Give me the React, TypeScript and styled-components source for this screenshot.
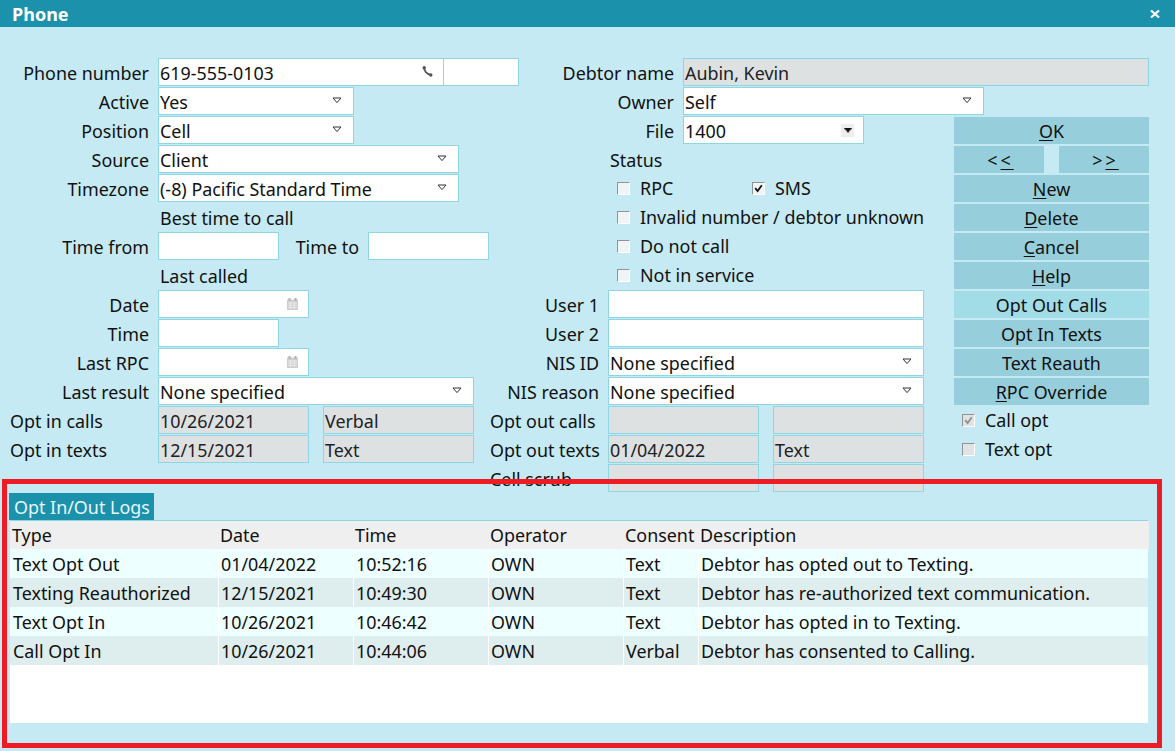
import React from "react";
import styled, { createGlobalStyle } from "styled-components";

const Global = createGlobalStyle`
  html, body { margin: 0; padding: 0; background: #c5eaf3; }
  body { font-family: "Noto Sans", "Open Sans", sans-serif; font-size: 17.9px; color: #111; }
`;

const Page = styled.div`
  position: relative;
  width: 1175px;
  height: 751px;
  overflow: hidden;
  background: #c5eaf3;
`;

const TitleBar = styled.header`
  height: 27px;
  background: #1c91ab;
  color: #fff;
  display: flex;
  align-items: center;
  justify-content: space-between;
  padding: 0 15px 0 12px;
  font-weight: 700;
  font-size: 18px;
`;

const Form = styled.div`
  display: flex;
  padding-top: 31px;
  height: 462px;
  box-sizing: border-box;
`;

const Column = styled.div<{ $w: number }>`
  width: ${(p) => p.$w}px;
  flex: none;
  display: flex;
  flex-direction: column;
  gap: 1px;
`;

const Row = styled.div`
  display: flex;
  height: 28px;
  align-items: center;
  flex: none;
`;

const Label = styled.label<{ $w: number }>`
  width: ${(p) => p.$w}px;
  margin-right: 9px;
  padding-top: 2px;
  flex: none;
  text-align: right;
  white-space: nowrap;
`;

const LeftLabel = styled.label<{ $indent: number; $w: number }>`
  width: ${(p) => p.$w}px;
  padding: 2px 0 0 ${(p) => p.$indent}px;
  box-sizing: border-box;
  flex: none;
  white-space: nowrap;
`;

const Field = styled.div<{ $w: number; $gray?: boolean; $gap?: number }>`
  width: ${(p) => p.$w}px;
  height: 28px;
  margin-left: ${(p) => p.$gap ?? 0}px;
  flex: none;
  box-sizing: border-box;
  border: 1px solid #8ed6e3;
  background: ${(p) => (p.$gray ? "#dee1e2" : "#fff")};
  display: flex;
  align-items: center;
  justify-content: space-between;
  padding: 2px 1px 0 1px;
  white-space: nowrap;
  color: ${(p) => (p.$gray ? "#222" : "#111")};
`;

const IconSlot = styled.span<{ $right: number }>`
  display: flex;
  margin: 0 ${(p) => p.$right}px 3px 0;
`;

const FileArrow = styled.span`
  width: 13px;
  height: 13px;
  margin: 0 8px 2px 0;
  background: #eeeeee;
  display: flex;
  align-items: center;
  justify-content: center;
`;

const RightBlock = styled.div`
  display: flex;
  flex-direction: column;
  gap: 1px;
  width: 670px;
`;

const Split = styled.div`
  display: flex;
  align-items: flex-start;
`;

const ButtonStack = styled.div`
  width: 195px;
  margin-top: 1px;
  display: flex;
  flex-direction: column;
  gap: 2px;
`;

const Button = styled.button<{ $light?: boolean }>`
  height: 27px;
  flex: none;
  width: 100%;
  border: 0;
  padding: 1px 0 0;
  font: inherit;
  color: #111;
  background: ${(p) => (p.$light ? "#a2dce6" : "#96cfdb")};
  u { text-underline-offset: 2px; }
`;

const PairRow = styled.div`
  display: flex;
  height: 27px;
  flex: none;
  justify-content: space-between;
`;

const PairButton = styled(Button)`
  width: 90px;
  padding-left: 3px;
`;

const Spaced = styled.span`
  letter-spacing: 3px;
`;

const CheckStack = styled.div`
  display: flex;
  flex-direction: column;
  gap: 1px;
  margin-top: -1px;
`;

const CheckRow = styled.div<{ $indent: number }>`
  height: 28px;
  flex: none;
  display: flex;
  align-items: center;
  padding-left: ${(p) => p.$indent}px;
`;

const Box = styled.span<{ $muted?: boolean }>`
  width: 13px;
  height: 13px;
  flex: none;
  box-sizing: border-box;
  border: 1px solid;
  border-color: #8f9496 #fff #fff #8f9496;
  background: ${(p) => (p.$muted ? "#dfe3e4" : "#f1f4f4")};
  display: flex;
  align-items: center;
  justify-content: center;
  margin-right: 10px;
`;

const CheckGroup = styled.span<{ $w?: number }>`
  display: flex;
  align-items: center;
  width: ${(p) => (p.$w ? `${p.$w}px` : "auto")};
  white-space: nowrap;
`;

const PlainText = styled.div<{ $indent: number }>`
  height: 28px;
  flex: none;
  display: flex;
  align-items: center;
  padding: 2px 0 0 ${(p) => p.$indent}px;
  box-sizing: border-box;
`;

const LogSection = styled.section`
  padding: 4px 27px 0 9px;
  height: 258px;
  box-sizing: border-box;
`;

const Tab = styled.div`
  width: 145px;
  height: 27px;
  background: #1c91ab;
  color: #e6f7fa;
  box-sizing: border-box;
  padding-left: 5px;
  display: flex;
  align-items: center;
  white-space: nowrap;
`;

const Table = styled.div`
  width: 1138px;
  margin-left: 1px;
  border-top: 1px solid #8ed6e3;
  background: #fff;
  height: 203px;
  box-sizing: border-box;
`;

const columns = "209px 135px 135px 135px 75px 1fr";

const HeaderRow = styled.div`
  display: grid;
  grid-template-columns: ${columns};
  height: 28px;
  background: #efefef;
  align-items: center;
  margin-right: -1px;
`;

const HeaderCell = styled.div`
  padding-left: 1px;
  white-space: nowrap;
  &:first-child { padding-left: 2px; }
`;

const DataRow = styled.div<{ $alt: boolean }>`
  display: grid;
  grid-template-columns: ${columns};
  height: 29px;
  background: ${(p) => (p.$alt ? "#deeeee" : "#eeffff")};
`;

const DataCell = styled.div`
  display: flex;
  align-items: center;
  padding-left: 2px;
  border-right: 1px solid #fff;
  white-space: nowrap;
  &:first-child { padding-left: 3px; }
  &:last-child { border-right: 0; }
`;

const Annotation = styled.div`
  position: absolute;
  left: 2px;
  top: 479px;
  width: 1160px;
  height: 269px;
  box-sizing: border-box;
  border: 5px solid #ed1c24;
  pointer-events: none;
`;

const Caret = () => (
  <svg width="10" height="7" viewBox="0 0 10 7">
    <path d="M1 1H9L5 5.6Z" fill="#fff" stroke="#333" strokeWidth="1" />
  </svg>
);

const SolidCaret = () => (
  <svg width="8" height="5" viewBox="0 0 9 6">
    <path d="M0 0H9V1.5H7.5V3H6V4.5H5V6H4V4.5H3V3H1.5V1.5H0Z" fill="#111" />
  </svg>
);

const PhoneIcon = () => (
  <svg width="11" height="11" viewBox="0 0 11 11">
    <path d="M2.2 1.2C2 4.6 4.6 8 9.6 9.2" fill="none" stroke="#555" strokeWidth="2" />
    <circle cx="2.2" cy="1.8" r="1.7" fill="#555" />
    <circle cx="8.8" cy="9" r="1.7" fill="#555" />
  </svg>
);

const CalendarIcon = () => (
  <svg width="11" height="12" viewBox="0 0 11 12">
    <rect x="0" y="1.5" width="11" height="10.5" fill="#cfcfcf" />
    <rect x="1.5" y="0" width="2" height="3" fill="#b2b2b2" />
    <rect x="7.5" y="0" width="2" height="3" fill="#b2b2b2" />
    <path d="M1 5H10M1 7.2H10M1 9.4H10M3.7 4V11M7.3 4V11" stroke="#eeeeee" strokeWidth="0.8" />
  </svg>
);

const Tick = ({ color = "#111" }: { color?: string }) => (
  <svg width="9" height="9" viewBox="0 0 9 9">
    <path d="M1.2 4.2 L3.6 7 L7.8 1.2" fill="none" stroke={color} strokeWidth="1.8" />
  </svg>
);

const CloseIcon = () => (
  <svg width="10" height="8" viewBox="0 0 10 8">
    <path d="M1 0.5L9 7.5M9 0.5L1 7.5" stroke="#fff" strokeWidth="2.2" />
  </svg>
);

const logs = [
  ["Text Opt Out", "01/04/2022", "10:52:16", "OWN", "Text", "Debtor has opted out to Texting."],
  ["Texting Reauthorized", "12/15/2021", "10:49:30", "OWN", "Text", "Debtor has re-authorized text communication."],
  ["Text Opt In", "10/26/2021", "10:46:42", "OWN", "Text", "Debtor has opted in to Texting."],
  ["Call Opt In", "10/26/2021", "10:44:06", "OWN", "Verbal", "Debtor has consented to Calling."],
];

const headers = ["Type", "Date", "Time", "Operator", "Consent", "Description"];

const Select = ({ w, value }: { w: number; value: string }) => (
  <Field $w={w}>
    {value}
    <IconSlot $right={10}>
      <Caret />
    </IconSlot>
  </Field>
);

const DateInput = () => (
  <Field $w={151}>
    <span />
    <IconSlot $right={9}>
      <CalendarIcon />
    </IconSlot>
  </Field>
);

export default function App() {
  return (
    <Page>
      <Global />
      <TitleBar>
        Phone
        <CloseIcon />
      </TitleBar>
      <Form>
        <Column $w={490}>
          <Row>
            <Label $w={149}>Phone number</Label>
            <Field $w={286}>
              619-555-0103
              <IconSlot $right={9}>
                <PhoneIcon />
              </IconSlot>
            </Field>
            <Field $w={76} $gap={-1} />
          </Row>
          <Row>
            <Label $w={149}>Active</Label>
            <Select w={196} value="Yes" />
          </Row>
          <Row>
            <Label $w={149}>Position</Label>
            <Select w={196} value="Cell" />
          </Row>
          <Row>
            <Label $w={149}>Source</Label>
            <Select w={301} value="Client" />
          </Row>
          <Row>
            <Label $w={149}>Timezone</Label>
            <Select w={301} value="(-8) Pacific Standard Time" />
          </Row>
          <PlainText $indent={160}>Best time to call</PlainText>
          <Row>
            <Label $w={149}>Time from</Label>
            <Field $w={121} />
            <Label $w={80}>Time to</Label>
            <Field $w={121} />
          </Row>
          <PlainText $indent={160}>Last called</PlainText>
          <Row>
            <Label $w={149}>Date</Label>
            <DateInput />
          </Row>
          <Row>
            <Label $w={149}>Time</Label>
            <Field $w={121} />
          </Row>
          <Row>
            <Label $w={149}>Last RPC</Label>
            <DateInput />
          </Row>
          <Row>
            <Label $w={149}>Last result</Label>
            <Select w={316} value="None specified" />
          </Row>
          <Row>
            <LeftLabel $indent={10} $w={158}>Opt in calls</LeftLabel>
            <Field $w={151} $gray>10/26/2021</Field>
            <Field $w={151} $gray $gap={14}>Verbal</Field>
          </Row>
          <Row>
            <LeftLabel $indent={10} $w={158}>Opt in texts</LeftLabel>
            <Field $w={151} $gray>12/15/2021</Field>
            <Field $w={151} $gray $gap={14}>Text</Field>
          </Row>
        </Column>
        <RightBlock>
          <Row>
            <Label $w={184}>Debtor name</Label>
            <Field $w={466} $gray>Aubin, Kevin</Field>
          </Row>
          <Row>
            <Label $w={184}>Owner</Label>
            <Select w={301} value="Self" />
          </Row>
          <Split>
            <Column $w={464}>
              <Row>
                <Label $w={184}>File</Label>
                <Field $w={181}>
                  1400
                  <FileArrow>
                    <SolidCaret />
                  </FileArrow>
                </Field>
              </Row>
              <PlainText $indent={120}>Status</PlainText>
              <CheckRow $indent={127}>
                <CheckGroup $w={135}>
                  <Box />
                  RPC
                </CheckGroup>
                <CheckGroup>
                  <Box>
                    <Tick />
                  </Box>
                  SMS
                </CheckGroup>
              </CheckRow>
              <CheckRow $indent={127}>
                <CheckGroup>
                  <Box />
                  Invalid number / debtor unknown
                </CheckGroup>
              </CheckRow>
              <CheckRow $indent={127}>
                <CheckGroup>
                  <Box />
                  Do not call
                </CheckGroup>
              </CheckRow>
              <CheckRow $indent={127}>
                <CheckGroup>
                  <Box />
                  Not in service
                </CheckGroup>
              </CheckRow>
              <Row>
                <Label $w={109}>User 1</Label>
                <Field $w={316} />
              </Row>
              <Row>
                <Label $w={109}>User 2</Label>
                <Field $w={316} />
              </Row>
              <Row>
                <Label $w={109}>NIS ID</Label>
                <Select w={316} value="None specified" />
              </Row>
              <Row>
                <Label $w={109}>NIS reason</Label>
                <Select w={316} value="None specified" />
              </Row>
              <Row>
                <LeftLabel $indent={0} $w={118}>Opt out calls</LeftLabel>
                <Field $w={151} $gray />
                <Field $w={151} $gray $gap={14} />
              </Row>
              <Row>
                <LeftLabel $indent={0} $w={118}>Opt out texts</LeftLabel>
                <Field $w={151} $gray>01/04/2022</Field>
                <Field $w={151} $gray $gap={14}>Text</Field>
              </Row>
              <Row>
                <LeftLabel $indent={0} $w={118}>Cell scrub</LeftLabel>
                <Field $w={151} $gray />
                <Field $w={151} $gray $gap={14} />
              </Row>
            </Column>
            <ButtonStack>
              <Button><u>O</u>K</Button>
              <PairRow>
                <PairButton><Spaced>&lt;<u>&lt;</u></Spaced></PairButton>
                <PairButton><Spaced>&gt;<u>&gt;</u></Spaced></PairButton>
              </PairRow>
              <Button><u>N</u>ew</Button>
              <Button><u>D</u>elete</Button>
              <Button><u>C</u>ancel</Button>
              <Button><u>H</u>elp</Button>
              <Button $light>Opt Out Calls</Button>
              <Button>Opt In Texts</Button>
              <Button>Text Reauth</Button>
              <Button><u>R</u>PC Override</Button>
              <CheckStack>
                <CheckRow $indent={8}>
                  <CheckGroup>
                    <Box $muted>
                      <Tick color="#8c9092" />
                    </Box>
                    Call opt
                  </CheckGroup>
                </CheckRow>
                <CheckRow $indent={8}>
                  <CheckGroup>
                    <Box $muted />
                    Text opt
                  </CheckGroup>
                </CheckRow>
              </CheckStack>
            </ButtonStack>
          </Split>
        </RightBlock>
      </Form>
      <LogSection>
        <Tab>Opt In/Out Logs</Tab>
        <Table>
          <HeaderRow>
            {headers.map((h) => (
              <HeaderCell key={h}>{h}</HeaderCell>
            ))}
          </HeaderRow>
          {logs.map((row, i) => (
            <DataRow key={row[0]} $alt={i % 2 === 1}>
              {row.map((c, j) => (
                <DataCell key={j}>{c}</DataCell>
              ))}
            </DataRow>
          ))}
        </Table>
      </LogSection>
      <Annotation />
    </Page>
  );
}
